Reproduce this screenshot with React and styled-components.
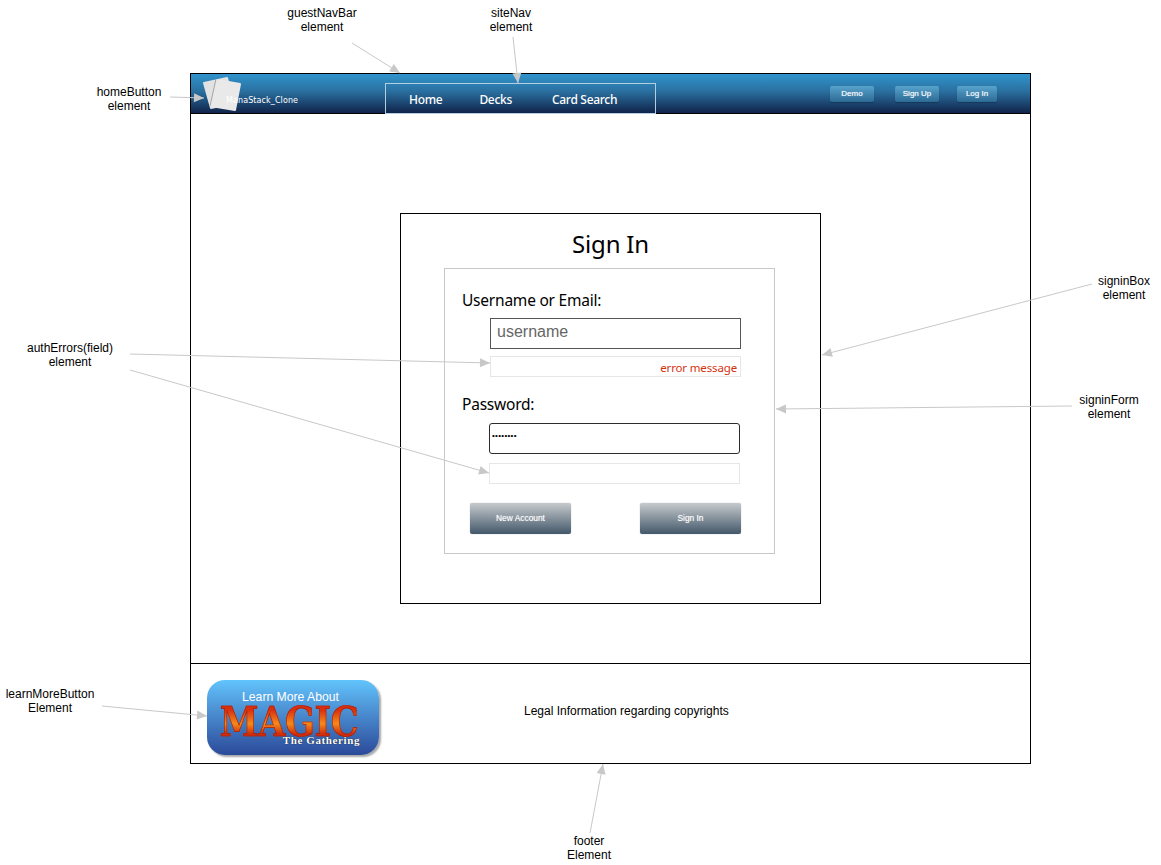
import styled, { createGlobalStyle } from "styled-components";

const GlobalStyle = createGlobalStyle`
  html, body {
    margin: 0;
    padding: 0;
    background: #fff;
  }
`;

const Canvas = styled.div`
  position: relative;
  width: 1161px;
  height: 865px;
  padding: 73px 0 0 190px;
  box-sizing: border-box;
  overflow: hidden;
  font-family: "Liberation Sans", Arial, sans-serif;
`;

const Frame = styled.div`
  width: 841px;
  height: 691px;
  box-sizing: border-box;
  border: 1px solid #000;
  display: flex;
  flex-direction: column;
`;

const NavBar = styled.header`
  height: 40px;
  flex: none;
  box-sizing: border-box;
  border-bottom: 1px solid #000;
  background: linear-gradient(#3094cc, #2a6f9f 45%, #10244a);
  display: flex;
  align-items: flex-end;
`;

const HomeButton = styled.div`
  position: relative;
  width: 194px;
  height: 39px;
  flex: none;
  display: flex;
  align-items: center;
`;

const CardsLogo = styled.svg`
  position: absolute;
  left: 11px;
  top: 2px;
`;

const HomeText = styled.span`
  position: relative;
  margin: 14px 0 0 35px;
  font-family: "DejaVu Sans", sans-serif;
  font-size: 8px;
  letter-spacing: 0.1px;
  color: #fff;
`;

const SiteNav = styled.nav`
  width: 271px;
  height: 31px;
  flex: none;
  box-sizing: border-box;
  margin-bottom: -1px;
  padding: 2px 0 0 23px;
  border: 1px solid #b4cfe0;
  display: flex;
  align-items: center;
`;

const NavLink = styled.a`
  margin-right: ${(p) => p.$gap || 0}px;
  font-family: "Noto Sans", sans-serif;
  font-size: 12px;
  font-weight: 500;
  letter-spacing: -0.3px;
  color: #fff;
`;

const AuthButtons = styled.div`
  display: flex;
  align-self: flex-start;
  margin: 12px 0 0 174px;
`;

const SmallButton = styled.button`
  width: ${(p) => p.$width}px;
  height: 16px;
  margin-left: ${(p) => p.$gap || 0}px;
  padding: 0 0 2px;
  border: none;
  border-radius: 2px;
  background: linear-gradient(#57a3cc, #2c6a94);
  box-shadow: 0 1px 1px rgba(0, 0, 0, 0.25);
  font-family: "Liberation Sans", sans-serif;
  font-size: 8px;
  color: #fff;
  text-shadow: 0 0 1px rgba(255, 255, 255, 0.6);
`;

const Main = styled.main`
  flex: 1;
  display: flex;
  justify-content: center;
  align-items: flex-start;
  padding-top: 99px;
`;

const SigninBox = styled.section`
  width: 421px;
  height: 391px;
  box-sizing: border-box;
  border: 1px solid #000;
  display: flex;
  flex-direction: column;
  align-items: center;
`;

const Title = styled.h1`
  margin: 13px 0 0;
  font-family: "Noto Sans", sans-serif;
  font-size: 24px;
  line-height: 34px;
  font-weight: 400;
  letter-spacing: -0.2px;
  color: #000;
`;

const SigninForm = styled.form`
  width: 331px;
  height: 286px;
  box-sizing: border-box;
  margin: 7px 2px 0 0;
  padding: 22px 0 0 17px;
  border: 1px solid #c8c8c8;
  display: flex;
  flex-direction: column;
  align-items: flex-start;
`;

const FieldLabel = styled.label`
  font-family: "Noto Sans", sans-serif;
  font-size: 15.5px;
  line-height: 18px;
  letter-spacing: -0.22px;
  color: #000;
  margin-top: ${(p) => p.$top || 0}px;
`;

const TextInput = styled.input`
  width: 251px;
  height: 31px;
  box-sizing: border-box;
  margin: ${(p) => p.$top}px 0 0 ${(p) => p.$left}px;
  padding: 0 6px 3px;
  border: 1px solid ${(p) => (p.$rounded ? "#2c2c2c" : "#555")};
  border-radius: ${(p) => (p.$rounded ? 3 : 0)}px;
  outline: none;
  font-family: "Liberation Sans", sans-serif;
  font-size: 16px;
  color: #000;

  &::placeholder {
    color: #666;
    opacity: 1;
  }
`;

const PasswordInput = styled(TextInput)`
  padding: 0 2px 6px;
  font-size: 8px;
  letter-spacing: 0.3px;
`;

const AuthErrors = styled.div`
  width: 251px;
  height: 21px;
  box-sizing: border-box;
  margin: ${(p) => p.$top}px 0 0 ${(p) => p.$left}px;
  padding: 3px 3px 0 0;
  border: 1px solid #e6e6e6;
  font-family: "Noto Sans", sans-serif;
  font-size: 11.5px;
  line-height: 16px;
  letter-spacing: -0.15px;
  text-align: right;
  color: #d5310e;
`;

const FormActions = styled.div`
  width: 271px;
  margin: 19px 0 0 8px;
  display: flex;
  justify-content: space-between;
`;

const FormButton = styled.button`
  width: 101px;
  height: 31px;
  padding: 0 0 2px;
  border: none;
  border-radius: 2px;
  background: linear-gradient(#c6cacd, #43586a);
  box-shadow: 0 0 1px rgba(60, 80, 100, 0.6);
  font-family: "Liberation Sans", sans-serif;
  font-size: 8.4px;
  color: #fff;
  text-shadow: 0 0 1px rgba(255, 255, 255, 0.6);
`;

const Footer = styled.footer`
  height: 100px;
  flex: none;
  box-sizing: border-box;
  border-top: 1px solid #000;
  padding: 16px 0 0 16px;
  display: flex;
  align-items: flex-start;
`;

const LearnMoreButton = styled.div`
  width: 172px;
  height: 75px;
  flex: none;
  box-sizing: border-box;
  padding-top: 10px;
  border-radius: 18px;
  background: linear-gradient(#62c4fc, #4f97d8 35%, #2b4a9a);
  box-shadow: 2px 2px 2px rgba(0, 0, 0, 0.35);
  display: flex;
  flex-direction: column;
  align-items: center;
`;

const LearnText = styled.span`
  margin-right: 5px;
  font-size: 12.2px;
  line-height: 14px;
  color: #fff;
`;

const MagicWord = styled.span`
  margin: 3px 8px 0 0;
  font-family: "DejaVu Serif", serif;
  font-size: 35px;
  line-height: 30px;
  font-weight: 700;
  letter-spacing: -0.3px;
  transform: scaleY(1.15);
  background: linear-gradient(#d8300f 15%, #f58a1c 55%, #cf2c0c 85%);
  -webkit-background-clip: text;
  background-clip: text;
  color: transparent;
  -webkit-text-stroke: 0.6px #a81e08;
`;

const GatheringWord = styled.span`
  align-self: flex-end;
  position: relative;
  margin: -3px 19px 0 0;
  font-family: "Liberation Serif", serif;
  font-size: 11px;
  line-height: 12px;
  font-weight: 700;
  letter-spacing: 0.6px;
  color: #fff;
  text-shadow: 0 0 1px #000;
`;

const LegalText = styled.span`
  margin: 24px 0 0 145px;
  font-size: 12px;
  line-height: 15px;
  color: #000;
`;

const Note = styled.div`
  position: absolute;
  left: ${(p) => p.$x}px;
  top: ${(p) => p.$y}px;
  width: 120px;
  margin-left: -60px;
  font-size: 12px;
  line-height: 14px;
  text-align: center;
  color: #000;
`;

const ArrowLayer = styled.svg`
  position: absolute;
  left: 0;
  top: 0;
`;

const notes = [
  { x: 322, y: 6, lines: ["guestNavBar", "element"] },
  { x: 511, y: 6, lines: ["siteNav", "element"] },
  { x: 129, y: 85, lines: ["homeButton", "element"] },
  { x: 1124, y: 274, lines: ["signinBox", "element"] },
  { x: 70, y: 341, lines: ["authErrors(field)", "element"] },
  { x: 1109, y: 393, lines: ["signinForm", "element"] },
  { x: 50, y: 687, lines: ["learnMoreButton", "Element"] },
  { x: 589, y: 834, lines: ["footer", "Element"] },
];

const arrows = [
  [352, 43, 400, 73],
  [513, 37, 518, 83],
  [170, 97, 204, 98],
  [1092, 284, 822, 355],
  [1072, 406, 776, 409],
  [130, 354, 490, 363],
  [130, 370, 489, 473],
  [102, 706, 207, 716],
  [590, 833, 603, 764],
];

function arrowHead([x1, y1, x2, y2]) {
  const angle = Math.atan2(y2 - y1, x2 - x1);
  const point = (len, side) => {
    const bx = x2 - Math.cos(angle) * len;
    const by = y2 - Math.sin(angle) * len;
    return `${bx - Math.sin(angle) * side},${by + Math.cos(angle) * side}`;
  };
  return `${x2},${y2} ${point(10, 4.5)} ${point(10, -4.5)}`;
}

function App() {
  return (
    <Canvas>
      <GlobalStyle />
      <Frame>
        <NavBar>
          <HomeButton>
            <CardsLogo width="42" height="37" viewBox="0 0 42 37">
              <polygon points="2,7 25,2 32,27 9,32" fill="#e2e2e2" stroke="#e2e2e2" strokeWidth="2" strokeLinejoin="round" />
              <polygon points="15,4 38,8 33,34 9,30" fill="#e9e9e9" stroke="#e9e9e9" strokeWidth="2" strokeLinejoin="round" />
              <path d="M14 3 L8 30" stroke="#8a8a8a" strokeWidth="0.7" fill="none" />
            </CardsLogo>
            <HomeText>ManaStack_Clone</HomeText>
          </HomeButton>
          <SiteNav>
            <NavLink $gap={37}>Home</NavLink>
            <NavLink $gap={40}>Decks</NavLink>
            <NavLink>Card Search</NavLink>
          </SiteNav>
          <AuthButtons>
            <SmallButton $width={44}>Demo</SmallButton>
            <SmallButton $width={44} $gap={21}>Sign Up</SmallButton>
            <SmallButton $width={40} $gap={18}>Log In</SmallButton>
          </AuthButtons>
        </NavBar>
        <Main>
          <SigninBox>
            <Title>Sign In</Title>
            <SigninForm>
              <FieldLabel>Username or Email:</FieldLabel>
              <TextInput $top={9} $left={28} placeholder="username" />
              <AuthErrors $top={7} $left={28}>error message</AuthErrors>
              <FieldLabel $top={18}>Password:</FieldLabel>
              <PasswordInput $top={10} $left={27} $rounded type="password" defaultValue="password" />
              <AuthErrors $top={9} $left={27} />
              <FormActions>
                <FormButton type="button">New Account</FormButton>
                <FormButton type="button">Sign In</FormButton>
              </FormActions>
            </SigninForm>
          </SigninBox>
        </Main>
        <Footer>
          <LearnMoreButton>
            <LearnText>Learn More About</LearnText>
            <MagicWord>MAGIC</MagicWord>
            <GatheringWord>The Gathering</GatheringWord>
          </LearnMoreButton>
          <LegalText>Legal Information regarding copyrights</LegalText>
        </Footer>
      </Frame>
      <ArrowLayer width="1161" height="865">
        {arrows.map((a) => (
          <g key={a.join("-")}>
            <line x1={a[0]} y1={a[1]} x2={a[2]} y2={a[3]} stroke="#c8c8c8" strokeWidth="1" />
            <polygon points={arrowHead(a)} fill="#c8c8c8" />
          </g>
        ))}
      </ArrowLayer>
      {notes.map((n) => (
        <Note key={n.lines[0]} $x={n.x} $y={n.y}>
          {n.lines[0]}
          <br />
          {n.lines[1]}
        </Note>
      ))}
    </Canvas>
  );
}

export default App;
